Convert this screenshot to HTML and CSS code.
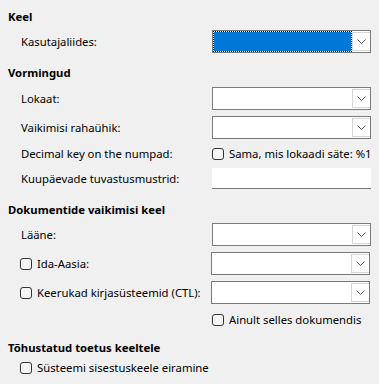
FILE: index.html
```html
<!DOCTYPE html>
<html lang="et">
<head>
    <meta charset="UTF-8">
    <title>Keeled</title>
    <link rel="stylesheet" href="styles.css">
</head>
<body>
    <div class="page">
        <div class="heading h-keel">Keel</div>
        <div class="row r-ui">
            <span class="label">Kasutajaliides:</span>
            <div class="combo">
                <div class="value selected"></div>
                <div class="arrow"><svg width="9" height="5" viewBox="0 0 9 5"><path d="M0.5 0.5 L4.5 4.5 L8.5 0.5" fill="none" stroke="#5f5f5f" stroke-width="1"/></svg></div>
            </div>
        </div>

        <div class="heading h-vorm">Vormingud</div>
        <div class="row r-first">
            <span class="label">Lokaat:</span>
            <div class="combo">
                <div class="value"></div>
                <div class="arrow"><svg width="9" height="5" viewBox="0 0 9 5"><path d="M0.5 0.5 L4.5 4.5 L8.5 0.5" fill="none" stroke="#5f5f5f" stroke-width="1"/></svg></div>
            </div>
        </div>
        <div class="row r-next">
            <span class="label">Vaikimisi rahaühik:</span>
            <div class="combo">
                <div class="value"></div>
                <div class="arrow"><svg width="9" height="5" viewBox="0 0 9 5"><path d="M0.5 0.5 L4.5 4.5 L8.5 0.5" fill="none" stroke="#5f5f5f" stroke-width="1"/></svg></div>
            </div>
        </div>
        <div class="row r-decimal">
            <span class="label">Decimal key on the numpad:</span>
            <label class="check"><span class="box"></span>Sama, mis lokaadi säte: %1</label>
        </div>
        <div class="row r-date">
            <span class="label">Kuupäevade tuvastusmustrid:</span>
            <div class="field"></div>
        </div>

        <div class="heading h-dok">Dokumentide vaikimisi keel</div>
        <div class="row r-first2">
            <span class="label">Lääne:</span>
            <div class="combo">
                <div class="value"></div>
                <div class="arrow"><svg width="9" height="5" viewBox="0 0 9 5"><path d="M0.5 0.5 L4.5 4.5 L8.5 0.5" fill="none" stroke="#5f5f5f" stroke-width="1"/></svg></div>
            </div>
        </div>
        <div class="row r-next">
            <label class="check label-check"><span class="box"></span>Ida-Aasia:</label>
            <div class="combo">
                <div class="value"></div>
                <div class="arrow"><svg width="9" height="5" viewBox="0 0 9 5"><path d="M0.5 0.5 L4.5 4.5 L8.5 0.5" fill="none" stroke="#5f5f5f" stroke-width="1"/></svg></div>
            </div>
        </div>
        <div class="row r-next">
            <label class="check label-check"><span class="box"></span>Keerukad kirjasüsteemid (CTL):</label>
            <div class="combo">
                <div class="value"></div>
                <div class="arrow"><svg width="9" height="5" viewBox="0 0 9 5"><path d="M0.5 0.5 L4.5 4.5 L8.5 0.5" fill="none" stroke="#5f5f5f" stroke-width="1"/></svg></div>
            </div>
        </div>
        <div class="row r-only">
            <span class="label"></span>
            <label class="check"><span class="box"></span>Ainult selles dokumendis</label>
        </div>

        <div class="heading h-toh">Tõhustatud toetus keeltele</div>
        <div class="row r-ignore">
            <label class="check label-check"><span class="box"></span>Süsteemi sisestuskeele eiramine</label>
        </div>
    </div>
</body>
</html>
```

FILE: styles.css
```css
body {
    margin: 0;
    background: #f0f0f0;
    font-family: 'Noto Sans', 'Open Sans', sans-serif;
    font-size: 11.3px;
    color: #000;
}
.page {
    padding: 9px 8px 0 8px;
    width: 363px;
}
.heading {
    font-weight: bold;
    line-height: 16px;
    height: 16px;
}
.h-vorm { margin-top: 12px; }
.h-dok { margin-top: 13px; }
.h-toh { margin-top: 12px; }
.row {
    display: flex;
    align-items: center;
    padding-left: 13px;
    height: 23px;
}
.label {
    width: 191px;
    flex: none;
    line-height: 16px;
    white-space: nowrap;
}
.r-ui { margin-top: 5px; }
.r-first { margin-top: 6px; }
.r-first2 { margin-top: 5px; }
.r-next { margin-top: 6px; }
.r-decimal { margin-top: 3px; }
.r-date { margin-top: 3px; height: 21px; }
.r-only { margin-top: 8px; height: 16px; }
.r-ignore { margin-top: 4px; height: 16px; }
.combo {
    width: 159px;
    height: 23px;
    box-sizing: border-box;
    border: 1px solid #7a7a7a;
    background: #fff;
    display: flex;
}
.value {
    flex: 1;
}
.value.selected {
    background: linear-gradient(#0078d7, #0078d7) padding-box, #fff border-box;
    border: 1px dotted #000;
}
.arrow {
    width: 18px;
    flex: none;
    box-sizing: border-box;
    border: 1px solid #d6d6d6;
    border-right: none;
    margin: 1px 0;
    background: #fff;
    display: flex;
    align-items: center;
    justify-content: center;
}
.field {
    width: 159px;
    height: 21px;
    box-sizing: border-box;
    background: #fff;
    border-bottom: 1px solid #7a7a7a;
}
.check {
    display: flex;
    align-items: center;
    line-height: 16px;
    white-space: nowrap;
}
.label-check {
    width: 191px;
    flex: none;
    margin-left: -1px;
}
.box {
    width: 12px;
    height: 12px;
    box-sizing: border-box;
    border: 1px solid #333;
    border-radius: 3px;
    background: #f7f7f7;
    margin-right: 5px;
    flex: none;
}
```
